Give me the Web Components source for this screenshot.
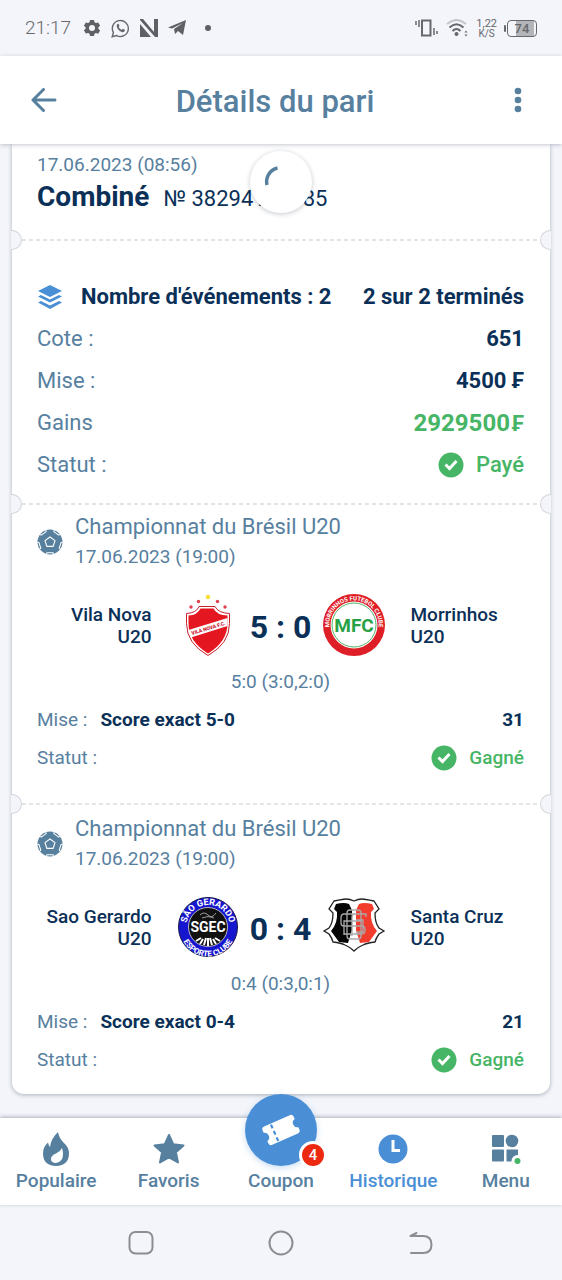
<!DOCTYPE html>
<html lang="fr">
<head>
<meta charset="utf-8">
<meta name="viewport" content="width=device-width, initial-scale=1">
<title>Détails du pari</title>
<style>
  :root {
    --page: #f3f5fa;
    --slate: #57809f;
    --navy: #0b3058;
    --blue: #4a8fd6;
    --green: #47b566;
    --red: #ec2a10;
    --system: #8b8d92;
  }
  body {
    margin: 0;
    background: var(--page);
    color: var(--navy);
    font-family: Roboto, "Liberation Sans", sans-serif;
  }
</style>
</head>
<body>
<bet-app></bet-app>

<template id="bet-app">
  <style>
    :host { display: flex; flex-direction: column; min-height: 100vh; }
    main { flex: 1; position: relative; padding: 0 12px 24px; }
    .card { background: #fff; border-radius: 0 0 12px 12px; box-shadow: 0 1px 4px rgba(60, 70, 90, .4); }
    pull-spinner { position: absolute; top: 7px; left: 50%; margin-left: -31px; }
  </style>
  <status-bar></status-bar>
  <app-header>Détails du pari</app-header>
  <main>
    <div class="card">
      <ticket-head date="17.06.2023 (08:56)" number="№ 38294100085">Combiné</ticket-head>
      <ticket-tear></ticket-tear>
      <bet-summary></bet-summary>
      <ticket-tear></ticket-tear>
      <match-row league="Championnat du Brésil U20" date="17.06.2023 (19:00)" score="5 : 0" periods="5:0 (3:0,2:0)" bet="Score exact 5-0" odds="31">
        <span slot="home">Vila Nova<br>U20</span>
        <crest-vila slot="home-crest"></crest-vila>
        <crest-morrinhos slot="away-crest"></crest-morrinhos>
        <span slot="away">Morrinhos<br>U20</span>
      </match-row>
      <ticket-tear></ticket-tear>
      <match-row class="last" league="Championnat du Brésil U20" date="17.06.2023 (19:00)" score="0 : 4" periods="0:4 (0:3,0:1)" bet="Score exact 0-4" odds="21">
        <span slot="home">Sao Gerardo<br>U20</span>
        <crest-gerardo slot="home-crest"></crest-gerardo>
        <crest-cruz slot="away-crest"></crest-cruz>
        <span slot="away">Santa Cruz<br>U20</span>
      </match-row>
    </div>
    <pull-spinner></pull-spinner>
  </main>
  <tab-bar></tab-bar>
  <system-bar></system-bar>
</template>

<template id="status-bar">
  <style>
    :host { display: flex; align-items: center; justify-content: space-between; height: 56px; padding: 0 25px; color: #66686c; }
    div { display: flex; align-items: center; }
    .time { font-size: 19px; font-weight: 300; line-height: 24px; margin-right: 12px; }
    .left svg { margin-right: 10px; }
    .right { gap: 8px; }
    .speed { display: block; text-align: center; line-height: 9px; font-size: 10px; }
    .speed b { display: block; font-weight: 400; font-size: 11px; line-height: 10px; }
    .battery { width: 28px; height: 15px; border: 1px solid #66686c; border-radius: 4px; position: relative; justify-content: center; font-size: 13px; font-weight: 500; line-height: 15px; background: linear-gradient(90deg, transparent 8px, #b4b5b9 8px, #b4b5b9 26px, transparent 26px); margin-left: 2px; }
    .battery::before { content: ""; position: absolute; left: -4px; top: 4px; width: 2px; height: 7px; background: #66686c; border-radius: 1px; }
  </style>
  <div class="left">
    <span class="time">21:17</span>
    <svg width="18" height="18" viewBox="0 0 18 18"><path fill="#5f6064" fill-rule="evenodd" d="M7 1h4l.5 2.300 1.400.8 2.300-.7 1.900 3.300-1.700 1.600v1.500l1.700 1.600-1.900 3.300-2.300-.7-1.400.8L11 17H7l-.5-2.300-1.400-.8-2.300.7-1.900-3.300 1.700-1.600V8.300L.9 6.700l1.900-3.300 2.300.7 1.400-.8zM9 6a3 3 0 1 0 0 6 3 3 0 0 0 0-6z"/></svg>
    <svg width="19" height="19" viewBox="0 0 19 19" fill="none" stroke="#66686c" stroke-width="1.400"><path d="M1.200 17.800l1.200-4.300a8 8 0 1 1 3.200 3.100z"/><path fill="#66686c" stroke="none" d="M6.100 5.300c.6-.8 1.400-.8 1.700-.1l.6 1.500c.2.500-.5 1-.7 1.400.7 1.300 1.700 2.200 3.100 2.800.5-.4.8-1.200 1.300-1l1.600.8c.5.300.1 1.600-.7 2.100-1.400.9-3.600-.1-5.100-1.500C6.300 9.800 5 7.100 6.100 5.300z"/></svg>
    <svg width="18" height="18" viewBox="0 0 18 18" fill="#5f6064"><path d="M0 0h3l11 13V0h4v18h-3L0 1zM0 5l11 13H0z"/></svg>
    <svg width="18" height="16" viewBox="0 0 18 16" fill="#5f6064"><path d="M0 7.500L18 0l-3 15-5-4-3 3-1-5 9-6-11 5.500z"/></svg>
    <svg width="20" height="8" viewBox="0 0 20 8"><circle cx="12" cy="4" r="3" fill="#5f6064"/></svg>
  </div>
  <div class="right">
    <svg width="23" height="18" viewBox="0 0 23 18" fill="none" stroke="#66686c"><path stroke-width="1.500" d="M1 2v4M4 1v7M19 9v7M22 12v3"/><rect x="7" y="1.500" width="8.500" height="15" stroke-width="2"/></svg>
    <svg width="22" height="18" viewBox="0 0 22 18" fill="none" stroke="#66686c" stroke-width="2"><path stroke="#c4c5c9" d="M1 5Q10.500-3 20 5"/><path d="M3.500 8.500Q10.500 2 17.500 8.500M6.500 12Q10.500 8 14.500 12"/><circle cx="10.500" cy="15" r="2" fill="#66686c" stroke="none"/><path d="M18.500 13.500l1.500-2 1.500 2zM18.500 15.500l1.500 2 1.500-2z" fill="#66686c" stroke="none"/></svg>
    <span class="speed"><b>1,22</b>K/S</span>
    <div class="battery">74</div>
  </div>
</template>

<template id="app-header">
  <style>
    :host { display: flex; align-items: center; justify-content: space-between; height: 88px; padding: 0 24px; background: #fff; box-shadow: 0 1px 4px rgba(60, 70, 90, .3); position: relative; z-index: 1; }
    h1 { margin: 0; font-size: 31px; line-height: 40px; font-weight: 500; color: var(--slate); padding: 3px 12px 0 0; }
    button { width: 40px; height: 40px; padding: 0; border: 0; background: none; color: var(--slate); display: grid; place-items: center; }
  </style>
  <button aria-label="Retour"><svg width="26" height="24" viewBox="0 0 26 24" fill="none" stroke="currentColor" stroke-width="3" stroke-linecap="round" stroke-linejoin="round"><path d="M24 12H2M12.500 1.500L2 12l10.500 10.500"/></svg></button>
  <h1><slot></slot></h1>
  <button aria-label="Options"><svg width="8" height="26" viewBox="0 0 8 26" fill="currentColor"><circle cx="4" cy="4" r="3.300"/><circle cx="4" cy="13" r="3.300"/><circle cx="4" cy="22" r="3.300"/></svg></button>
</template>

<template id="pull-spinner">
  <style>
    :host { display: block; width: 62px; height: 62px; border-radius: 50%; background: #fff; box-shadow: 0 1px 5px rgba(60, 70, 90, .3); }
  </style>
  <svg width="62" height="62" viewBox="0 0 62 62" fill="none"><path d="M17 34A14 14 0 0 1 27.500 17" stroke="var(--slate)" stroke-width="3.500"/></svg>
</template>

<template id="ticket-head">
  <style>
    :host { display: block; height: 85px; padding: 11px 25px 0; }
    time { display: block; font-size: 19px; line-height: 20px; color: var(--slate); }
    p { margin: 4px 0 0; display: flex; align-items: baseline; gap: 14px; font-size: 22px; line-height: 36px; }
    b { font-size: 28px; font-weight: 700; }
  </style>
  <time></time>
  <p><b><slot></slot></b><span class="number"></span></p>
</template>

<template id="ticket-tear">
  <style>
    :host { display: flex; align-items: center; height: 20px; margin: -10px -1px; position: relative; }
    i { width: 10px; height: 18px; background: var(--page); border: 1px solid #d3d5da; }
    .l { border-left: 0; border-radius: 0 10px 10px 0; }
    .r { border-right: 0; border-radius: 10px 0 0 10px; }
    .line { flex: 1; height: 2px; background: repeating-linear-gradient(90deg, #e3e4e7 0 4px, transparent 4px 7px); }
  </style>
  <i class="l"></i><span class="line"></span><i class="r"></i>
</template>

<template id="status-mark">
  <style>
    :host { display: flex; align-items: center; gap: 12px; color: var(--green); font-weight: 500; }
    svg { display: block; }
  </style>
  <svg width="26" height="26" viewBox="0 0 26 26"><circle cx="13" cy="13" r="12.500" fill="var(--green)"/><path d="M7.500 12.500l4 4 7-7.500" fill="none" stroke="#fff" stroke-width="3"/></svg>
  <span><slot></slot></span>
</template>

<template id="bet-summary">
  <style>
    :host { display: block; padding: 36px 26px 18px 25px; font-size: 22px; line-height: 42px; }
    dl, dd, dt { margin: 0; }
    .row { display: flex; justify-content: space-between; height: 42px; }
    dt { color: var(--slate); }
    dd { font-weight: 700; }
    .head dt, .head dd { font-weight: 700; color: var(--navy); }
    .head dt { display: flex; align-items: center; gap: 18px; }
    .gain { color: var(--green); font-size: 24px; }
    small { font-size: 22px; margin-left: 2px; }
  </style>
  <dl>
    <div class="row head"><dt><svg width="26" height="26" viewBox="0 0 26 26" fill="var(--blue)"><path d="M13 1l12 6-12 6L1 7z"/><path d="M1 12.500l3-1.500 9 4.500 9-4.500 3 1.500-12 6z"/><path d="M1 18.500L4 17l9 4.500 9-4.500 3 1.500-12 6.500z"/></svg>Nombre d'événements : 2</dt><dd>2 sur 2 terminés</dd></div>
    <div class="row"><dt>Cote :</dt><dd>651</dd></div>
    <div class="row"><dt>Mise :</dt><dd>4500 ₣</dd></div>
    <div class="row"><dt>Gains</dt><dd class="gain">2929500<small>₣</small></dd></div>
    <div class="row"><dt>Statut :</dt><dd><status-mark>Payé</status-mark></dd></div>
  </dl>
</template>

<template id="match-row">
  <style>
    :host { display: block; padding: 8px 26px 27px 25px; font-size: 19px; color: var(--slate); }
    :host(.last) { padding-top: 10px; padding-bottom: 15px; }
    header { display: flex; align-items: center; gap: 12px; line-height: 30px; }
    .league { display: block; font-size: 22px; }
    .teams { display: grid; grid-template-columns: 1fr 64px 82px 64px 1fr; align-items: center; height: 64px; margin: 21px 0 13px; color: var(--navy); font-weight: 500; line-height: 22px; }
    .home, .away { padding: 2px 24px 0; }
    .home { text-align: right; }
    .away { padding-left: 25px; padding-right: 0; }
    .home { padding-left: 0; }
    .score { text-align: center; font-size: 32px; font-weight: 700; line-height: 60px; padding-top: 4px; }
    .periods { text-align: center; line-height: 24px; margin: 0 0 7px; }
    .row { display: flex; justify-content: space-between; line-height: 38px; height: 38px; }
    dl, dd, dt { margin: 0; }
    .row div { display: flex; gap: 13px; }
    dd { color: var(--navy); font-weight: 500; }
    .bet, .odds { font-weight: 700; font-size: 19px; }
  </style>
  <header>
    <svg width="26" height="26" viewBox="0 0 26 26"><defs><clipPath id="ball"><circle cx="13" cy="13" r="12.500"/></clipPath></defs><circle cx="13" cy="13" r="12.500" fill="var(--slate)"/><g fill="none" stroke="#fff" stroke-width="1.100" clip-path="url(#ball)"><path d="M13 8l5 3.600-1.900 5.800H9.900L8 11.600z"/><path d="M9 26l1-2.300h6l1 2.300"/><g transform="rotate(72 13 13)"><path d="M9 26l1-2.300h6l1 2.300"/></g><g transform="rotate(144 13 13)"><path d="M9 26l1-2.300h6l1 2.300"/></g><g transform="rotate(216 13 13)"><path d="M9 26l1-2.300h6l1 2.300"/></g><g transform="rotate(288 13 13)"><path d="M9 26l1-2.300h6l1 2.300"/></g></g></svg>
    <div><span class="league"></span><time></time></div>
  </header>
  <div class="teams">
    <div class="home"><slot name="home"></slot></div>
    <slot name="home-crest"></slot>
    <div class="score"></div>
    <slot name="away-crest"></slot>
    <div class="away"><slot name="away"></slot></div>
  </div>
  <p class="periods"></p>
  <dl>
    <div class="row"><div><dt>Mise :</dt><dd class="bet"></dd></div><dd class="odds"></dd></div>
    <div class="row"><dt>Statut :</dt><dd><status-mark>Gagné</status-mark></dd></div>
  </dl>
</template>

<template id="crest-vila">
  <style>:host { display: block; width: 64px; height: 64px; }</style>
  <svg width="64" height="64" viewBox="0 0 64 64" role="img" aria-label="Vila Nova">
    <path d="M23 13.500h16q3 6.500 14.500 7v10q0 20-21.500 32-21.500-12-21.500-32v-10q10-.500 12.500-7z" fill="#fff" stroke="#c8202c" stroke-width="1"/>
    <path d="M24.500 15.500h13q3 6.500 14 7v8q0 18-19.500 30-19.500-12-19.500-30v-8q9-.500 12-7z" fill="#e4161f"/>
    <path d="M12.500 37L51.500 25v8L15 44.500z" fill="#fff"/>
    <text x="16" y="42" transform="rotate(-17 16 42)" font-size="5" font-weight="900" fill="#c8202c">VILA NOVA F.C.</text>
    <circle cx="32" cy="4" r="2.300" fill="#f6df3c"/><g fill="#dc4048"><circle cx="22.500" cy="8.500" r="1.700"/><circle cx="41.500" cy="8.500" r="1.700"/><circle cx="15" cy="14" r="1.700"/><circle cx="49" cy="14" r="1.700"/></g>
  </svg>
</template>

<template id="crest-morrinhos">
  <style>:host { display: block; width: 64px; height: 64px; }</style>
  <svg width="64" height="64" viewBox="0 0 64 64" role="img" aria-label="Morrinhos">
    <defs><path id="arc" d="M7.500 36A24.800 24.800 0 1 1 56.500 36"/></defs>
    <circle cx="32" cy="32" r="31" fill="#df1f27"/><circle cx="32" cy="32" r="23.500" fill="#fff"/><circle cx="32" cy="32" r="22" fill="none" stroke="#27a145" stroke-width=".8"/>
    <text font-size="6" font-weight="700" fill="#fff" text-anchor="middle"><textPath href="#arc" startOffset="50%">MORRINHOS FUTEBOL CLUBE</textPath></text>
    <text x="32" y="39" font-size="19" font-weight="700" fill="#27a145" text-anchor="middle">MFC</text>
  </svg>
</template>

<template id="crest-gerardo">
  <style>:host { display: block; width: 64px; height: 64px; }</style>
  <svg width="64" height="64" viewBox="0 0 64 64" role="img" aria-label="Sao Gerardo">
    <defs><path id="top" d="M11 36A21.500 21.500 0 1 1 53 36"/><path id="bottom" d="M4.500 34A27.500 27.500 0 0 0 59.500 34"/></defs>
    <circle cx="32" cy="32" r="29.500" fill="#1616cf" stroke="#16164a"/><circle cx="32" cy="32" r="19.500" fill="#111" stroke="#ddd" stroke-width=".8"/>
    <g font-weight="700" fill="#fff" text-anchor="middle">
      <text font-size="9"><textPath href="#top" startOffset="50%">SÃO GERARDO</textPath></text>
      <text font-size="8"><textPath href="#bottom" startOffset="50%">ESPORTE CLUBE</textPath></text>
      <text x="32" y="37" font-size="14">SGEC</text>
    </g>
    <path d="M24 49l3-5M28 50l2-7M32 51v-8M36 50l-2-7M40 49l-3-5M20 46l5-3M44 46l-5-3" stroke="#fff" stroke-width="2"/>
    <path d="M24 20q4-4 8 0t8-2M26 23q6-3 12 0" stroke="#999" fill="none"/>
  </svg>
</template>

<template id="crest-cruz">
  <style>:host { display: block; width: 64px; height: 64px; }</style>
  <svg width="64" height="64" viewBox="0 0 64 64" role="img" aria-label="Santa Cruz">
    <path d="M12 6q5-1 8-1.500Q26 3 32 6q6-3 12-1.500 3 .500 8 1.500l5 8-4 4q0 10 4 15l5 3-5 3q-3 4-4 8-8 1-12 3-5 2-9 6-4-4-9-6-4-2-12-3-1-4-4-8l-5-3 5-3q4-5 4-15l-4-4z" fill="#fff" stroke="#222" stroke-width="1.300"/>
    <path d="M14 9q8-2 13 0l3 6v20l-4 13-9-1-8-11q7-8 6-19l-3-3z" fill="#050505"/>
    <path d="M50 9q-8-2-13 0l-3 6v20l4 13 9-1 8-11q-7-8-6-19l3-3z" fill="#f23c2d"/>
    <g fill="none" stroke="#aaa" stroke-width="1.300"><rect x="25" y="15" width="14" height="29" rx="3"/><path d="M44 22v-3H22q-3 0-3 4v5q0 3 3 3h18q3 0 3 4t-3 4H22M30 41V22q0-3 3-3M22 40V26h18M34 25h7v12h-7"/></g>
  </svg>
</template>

<template id="tab-bar">
  <style>
    :host { display: block; background: #fff; box-shadow: 0 -1px 4px rgba(60, 70, 90, .4); position: relative; }
    nav { display: grid; grid-template-columns: repeat(5, 1fr); height: 87px; }
    a { display: flex; flex-direction: column; align-items: center; color: var(--slate); font-size: 19px; font-weight: 500; line-height: 24px; text-decoration: none; }
    .icon { height: 36px; margin: 13px 0 2px; display: grid; place-items: center; }
    .active { color: var(--blue); }
    .round { position: relative; width: 72px; height: 72px; margin: -24px 0 3px; border-radius: 50%; background: var(--blue); display: grid; place-items: center; box-shadow: 0 2px 6px rgba(74, 143, 214, .3); }
    .badge { position: absolute; right: -10px; bottom: -3px; width: 22px; height: 22px; border: 3px solid #fff; border-radius: 50%; background: var(--red); color: #fff; font-size: 15px; line-height: 22px; text-align: center; }
  </style>
  <nav>
    <a href="#populaire"><span class="icon"><svg width="28" height="34" viewBox="0 0 28 34"><path fill="currentColor" fill-rule="evenodd" d="M16 0q1 6 5.500 10.500Q27 15.500 27 21q0 12.500-13 13Q1 33.500 1 21.500q0-6.500 5-11 .500 3 2 4.500Q9 6.500 16 0zM20 16q-2 4-6 5.500-5 2-5 5.500 0 4 5 4 7-1 7-9 0-3-1-6z"/></svg></span>Populaire</a>
    <a href="#favoris"><span class="icon"><svg width="32" height="32" viewBox="0 0 32 32"><path fill="currentColor" stroke="currentColor" stroke-width="2" stroke-linejoin="round" d="M16 2l4.300 9.300 10.200 1.200-7.600 6.800 2.100 10.200L16 24.400l-9 5.100 2.100-10.200L1.500 12.500l10.200-1.200z"/></svg></span>Favoris</a>
    <a href="#coupon"><span class="round"><svg width="40" height="36" viewBox="0 0 40 36"><g transform="rotate(-24 20 18)"><path fill="#fff" d="M6 8h28q3 0 3 3v2.500a4.600 4.600 0 0 0 0 9V25q0 3-3 3H6q-3 0-3-3v-2.500a4.600 4.600 0 0 0 0-9V11q0-3 3-3z"/><path d="M13 9v18" stroke="var(--blue)" stroke-width="2.200" stroke-dasharray="4 3"/></g></svg><span class="badge">4</span></span>Coupon</a>
    <a href="#historique" class="active"><span class="icon"><svg width="30" height="30" viewBox="0 0 30 30"><circle cx="15" cy="15" r="14.500" fill="currentColor"/><path d="M15 6v10.500h7" fill="none" stroke="#fff" stroke-width="3"/></svg></span>Historique</a>
    <a href="#menu"><span class="icon"><svg width="30" height="30" viewBox="0 0 30 30" fill="currentColor"><rect x="1" y="1" width="12" height="12" rx="1"/><circle cx="21" cy="7" r="6.300"/><rect x="1" y="15.500" width="12" height="12" rx="1"/><path d="M15.500 15.500h11.500v12h-11.500z"/><circle cx="26.500" cy="27" r="6" fill="#fff"/><circle cx="26.500" cy="27" r="3" fill="var(--green)"/></svg></span>Menu</a>
  </nav>
</template>

<template id="system-bar">
  <style>
    :host { display: flex; justify-content: center; gap: 100px; align-items: center; height: 75px; color: var(--system); }
    button { width: 40px; height: 40px; padding: 0; border: 0; background: none; color: inherit; display: grid; place-items: center; }
    svg { fill: none; stroke: currentColor; stroke-width: 2; }
  </style>
  <button aria-label="Applications récentes"><svg width="26" height="26" viewBox="0 0 26 26"><rect x="1.500" y="2" width="23" height="21.500" rx="6"/></svg></button>
  <button aria-label="Accueil"><svg width="26" height="26" viewBox="0 0 26 26"><circle cx="13" cy="13" r="11.500"/></svg></button>
  <button aria-label="Retour"><svg width="26" height="26" viewBox="0 0 26 26" stroke-linecap="round" stroke-linejoin="round"><path d="M8.500 3L2.500 6H15q8.500 0 8.500 8.500T15 23H3"/></svg></button>
</template>

<script>
  class TemplateElement extends HTMLElement {
    constructor() {
      super();
      this.attachShadow({ mode: "open" });
      this.shadowRoot.append(document.getElementById(this.localName).content.cloneNode(true));
    }
    fill(selector, attribute) {
      this.shadowRoot.querySelector(selector).textContent = this.getAttribute(attribute);
    }
  }

  class TicketHead extends TemplateElement {
    connectedCallback() {
      this.fill("time", "date");
      this.fill(".number", "number");
    }
  }

  class MatchRow extends TemplateElement {
    connectedCallback() {
      this.fill("time", "date");
      for (const name of ["league", "score", "periods", "bet", "odds"]) this.fill("." + name, name);
    }
  }

  customElements.define("ticket-head", TicketHead);
  customElements.define("match-row", MatchRow);
  for (const name of ["status-bar", "app-header", "pull-spinner", "ticket-tear", "status-mark", "bet-summary",
    "crest-vila", "crest-morrinhos", "crest-gerardo", "crest-cruz", "tab-bar", "system-bar", "bet-app"]) {
    customElements.define(name, class extends TemplateElement {});
  }
</script>
</body>
</html>
